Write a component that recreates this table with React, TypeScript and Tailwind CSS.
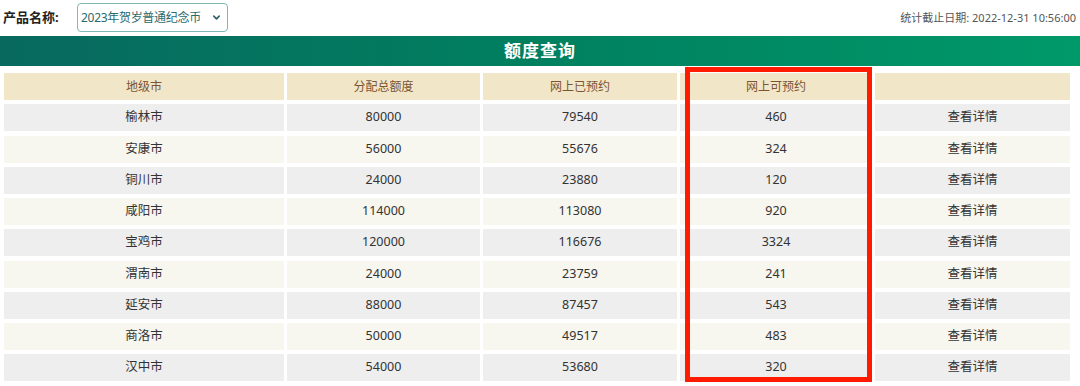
import React from 'react';

const rows = [
  { city: '榆林市', total: 80000, booked: 79540, left: 460 },
  { city: '安康市', total: 56000, booked: 55676, left: 324 },
  { city: '铜川市', total: 24000, booked: 23880, left: 120 },
  { city: '咸阳市', total: 114000, booked: 113080, left: 920 },
  { city: '宝鸡市', total: 120000, booked: 116676, left: 3324 },
  { city: '渭南市', total: 24000, booked: 23759, left: 241 },
  { city: '延安市', total: 88000, booked: 87457, left: 543 },
  { city: '商洛市', total: 50000, booked: 49517, left: 483 },
  { city: '汉中市', total: 54000, booked: 53680, left: 320 },
];

const headers = ['地级市', '分配总额度', '网上已预约', '网上可预约', ''];

const gridCols = 'grid grid-cols-[280px_193px_194px_192px_195px] gap-x-[3px]';

const App: React.FC = () => {
  return (
    <div
      className="relative w-[1080px] h-[386px] bg-white overflow-hidden text-[#333]"
      style={{ fontFamily: '"Noto Sans", "Noto Sans CJK SC", sans-serif' }}
    >
      {/* Top filter bar */}
      <div className="flex items-center justify-between h-[36px] pl-[3px] pr-[4px] pb-[1px]">
        <div className="flex items-center">
          <span className="text-[13px] font-bold text-[#222] w-[74px]">产品名称:</span>
          <div className="flex items-center justify-between w-[151px] h-[29px] border border-[#7fb9b7] rounded-[4px] pl-[3px] pr-[6px]">
            <span className="text-[12px] text-[#2b6a6e] whitespace-nowrap tracking-[-0.3px]">2023年贺岁普通纪念币</span>
            <svg className="w-[9px] h-[9px] text-[#2f5f6a]" viewBox="0 0 10 10" fill="none" stroke="currentColor">
              <path d="M2 3.5l3 3 3-3" strokeWidth={1.8} strokeLinecap="round" strokeLinejoin="round" />
            </svg>
          </div>
        </div>
        <span className="text-[11px] text-[#555] mt-[2px]">统计截止日期: 2022-12-31 10:56:00</span>
      </div>

      {/* Title bar */}
      <div className="h-[30px] flex items-center justify-center bg-gradient-to-r from-[#08695f] via-[#00805f] to-[#00996a]">
        <span className="text-[17px] font-bold text-white tracking-[1px]">额度查询</span>
      </div>

      {/* Table */}
      <div className="pl-[4px] pt-[7px] flex flex-col gap-y-[4.25px]">
        <div className={`${gridCols} h-[27px]`}>
          {headers.map((h, i) => (
            <div key={i} className="bg-[#f2e6c8] flex items-center justify-center text-[12px] text-[#7a5532]">
              {h}
            </div>
          ))}
        </div>
        {rows.map((r, i) => {
          const bg = i % 2 === 0 ? 'bg-[#eeeeee]' : 'bg-[#f7f6ef]';
          return (
            <div key={r.city} className={`${gridCols} h-[27px] text-[12.5px]`}>
              <div className={`${bg} flex items-center justify-center`}>{r.city}</div>
              <div className={`${bg} flex items-center justify-center`}>{r.total}</div>
              <div className={`${bg} flex items-center justify-center`}>{r.booked}</div>
              <div className={`${bg} flex items-center justify-center`}>{r.left}</div>
              <div className={`${bg} flex items-center justify-center`}>查看详情</div>
            </div>
          );
        })}
      </div>

      {/* Red highlight annotation */}
      <div className="absolute left-[685px] top-[67px] w-[187px] h-[315px] border-[5px] border-[#ff1a00] pointer-events-none" />
    </div>
  );
};

export default App;
